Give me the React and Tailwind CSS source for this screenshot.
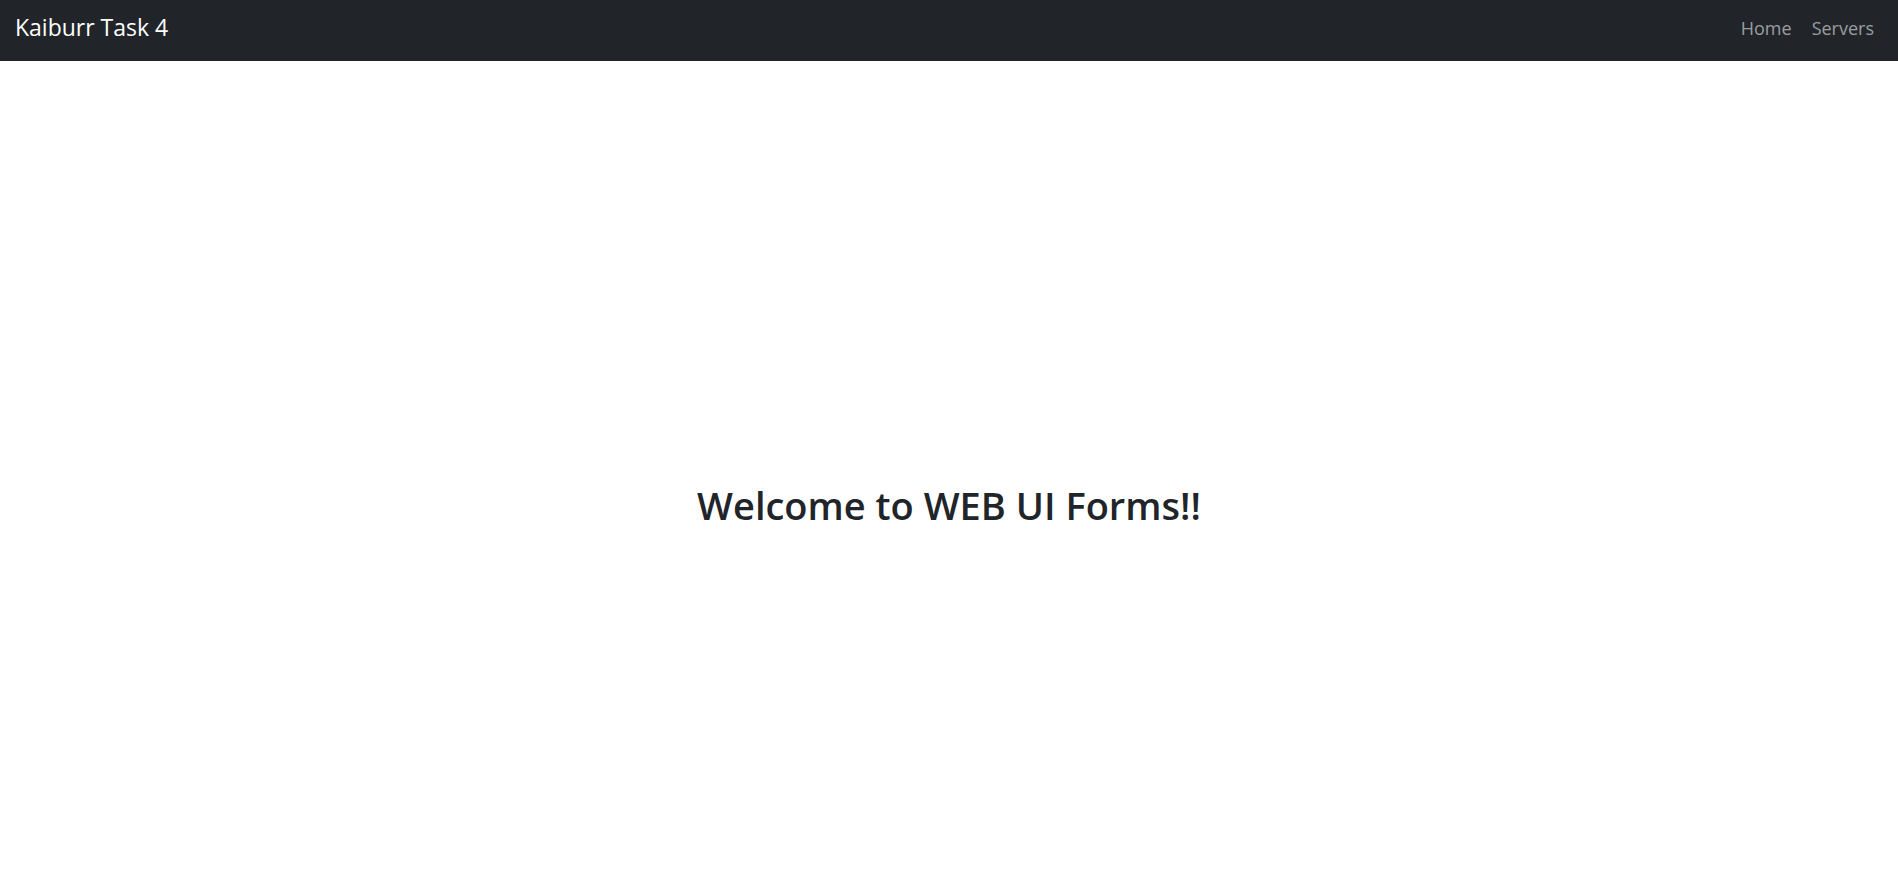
export default function App() {
  return (
    <div className="min-h-screen bg-white font-['Open_Sans',sans-serif]">
      {/* Navbar */}
      <nav className="h-[61px] bg-[#212529] flex items-center justify-between pl-[15px] pr-[24px] pb-[6px]">
        <a href="#" className="text-white text-[23px] leading-none">Kaiburr Task 4</a>
        <div className="flex items-center gap-[20px] text-[18px] leading-none text-[#9a9da0]">
          <a href="#">Home</a>
          <a href="#">Servers</a>
        </div>
      </nav>

      {/* Main */}
      <main className="pt-[420px] text-center">
        <h1 className="text-[38px] leading-[48px] font-semibold text-[#212529]">Welcome to WEB UI Forms!!</h1>
      </main>
    </div>
  )
}
